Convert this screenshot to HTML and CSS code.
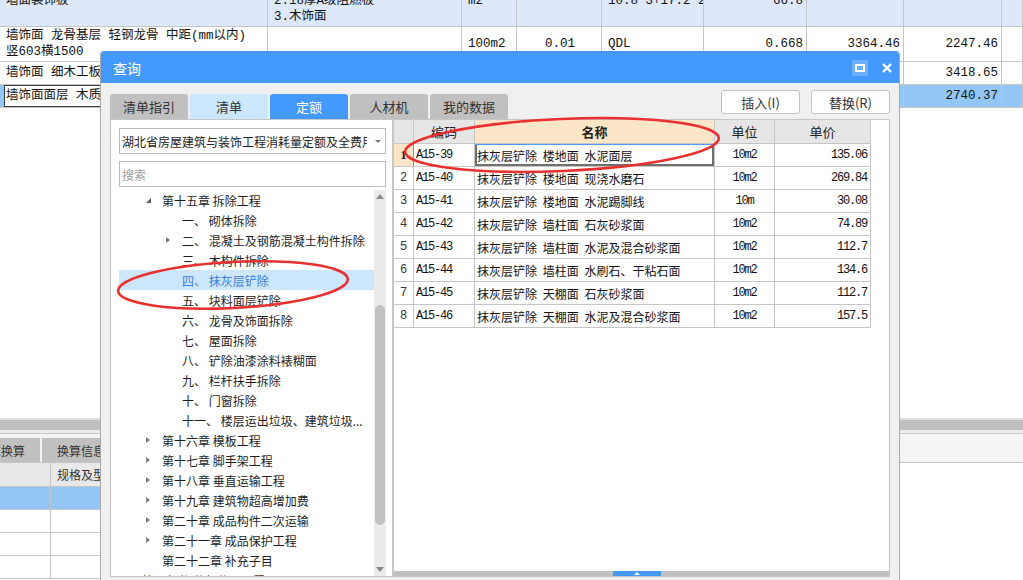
FILE: index.html
```html
<!DOCTYPE html>
<html lang="zh-CN">
<head>
<meta charset="utf-8">
<title>查询</title>
<link rel="stylesheet" href="styles.css">
</head>
<body>
<div class="app">
  <div class="bg">
    <div class="bgt">
      <div class="c r1 up"><span>墙面装饰板</span></div>
      <div class="c r1"><span>2.18厚A级阻燃板<br>3.木饰面</span></div>
      <div class="c r1 up"><span>m2</span></div>
      <div class="c r1 up"></div>
      <div class="c r1 up"><span>10.8*3+17.2*2</span></div>
      <div class="c r1 up rt"><span>66.8</span></div>
      <div class="c r1 up"></div>
      <div class="c r1 up"></div>
      <div class="c r1 up"></div>

      <div class="c"><span>墙饰面 龙骨基层 轻钢龙骨 中距(mm以内)<br>竖603横1500</span></div>
      <div class="c"></div>
      <div class="c"><span>100m2</span></div>
      <div class="c ct"><span>0.01</span></div>
      <div class="c"><span>QDL</span></div>
      <div class="c rt"><span>0.668</span></div>
      <div class="c rt"><span>3364.46</span></div>
      <div class="c rt"><span>2247.46</span></div>
      <div class="c"></div>

      <div class="c"><span>墙饰面 细木工板基层</span></div>
      <div class="c"></div>
      <div class="c"></div>
      <div class="c"></div>
      <div class="c"></div>
      <div class="c"></div>
      <div class="c"></div>
      <div class="c rt"><span>3418.65</span></div>
      <div class="c"></div>

      <div class="c sel ed"><div class="edit">墙饰面面层 木质装饰板</div></div>
      <div class="c sel"></div>
      <div class="c sel"></div>
      <div class="c sel"></div>
      <div class="c sel"></div>
      <div class="c sel"></div>
      <div class="c sel rt"><span>2740.35</span></div>
      <div class="c sel rt"><span>2740.37</span></div>
      <div class="c sel"></div>
    </div>

    <div class="bgspace"></div>

    <div class="bgb">
      <div class="band"></div>
      <div class="tabbar">
        <div class="btab first">标准换算</div>
        <div class="btab">换算信息</div>
      </div>
      <div class="lg">
        <div class="lc lh"></div><div class="lc lh"><span>规格及型号</span></div>
        <div class="lc lsel"></div><div class="lc lsel"></div>
        <div class="lc"></div><div class="lc"></div>
        <div class="lc"></div><div class="lc"></div>
        <div class="lc"></div><div class="lc"></div>
      </div>
    </div>
  </div>

  <div class="dlg">
    <div class="ttl">
      <span class="ttext">查询</span>
      <span class="wbtn max"><i></i></span>
      <span class="wbtn cls">
        <svg width="12" height="12" viewBox="0 0 12 12"><path d="M2 2 L10 10 M10 2 L2 10" stroke="#fff" stroke-width="2.4" fill="none"/></svg>
      </span>
    </div>

    <div class="head">
      <div class="tab">清单指引</div>
      <div class="tab lt">清单</div>
      <div class="tab on">定额</div>
      <div class="tab">人材机</div>
      <div class="tab">我的数据</div>
      <div class="btns">
        <button class="btn">插入(I)</button>
        <button class="btn">替换(R)</button>
      </div>
    </div>

    <div class="body">
      <div class="lp">
        <div class="combo">
          <span class="v">湖北省房屋建筑与装饰工程消耗量定额及全费用基价表</span>
          <span class="ar"></span>
        </div>
        <input class="search" type="text" placeholder="搜索">
        <div class="tree">
          <div class="tl">
            <div class="n l1"><i class="tg ex"></i><span>第十五章 拆除工程</span></div>
            <div class="n l2"><i class="tg"></i><span>一、 砌体拆除</span></div>
            <div class="n l2"><i class="tg co"></i><span>二、 混凝土及钢筋混凝土构件拆除</span></div>
            <div class="n l2"><i class="tg"></i><span>三、 木构件拆除</span></div>
            <div class="n l2 on"><i class="tg"></i><span>四、 抹灰层铲除</span></div>
            <div class="n l2"><i class="tg"></i><span>五、 块料面层铲除</span></div>
            <div class="n l2"><i class="tg"></i><span>六、 龙骨及饰面拆除</span></div>
            <div class="n l2"><i class="tg"></i><span>七、 屋面拆除</span></div>
            <div class="n l2"><i class="tg"></i><span>八、 铲除油漆涂料裱糊面</span></div>
            <div class="n l2"><i class="tg"></i><span>九、 栏杆扶手拆除</span></div>
            <div class="n l2"><i class="tg"></i><span>十、 门窗拆除</span></div>
            <div class="n l2"><i class="tg"></i><span>十一、 楼层运出垃圾、建筑垃圾...</span></div>
            <div class="n l1"><i class="tg co"></i><span>第十六章 模板工程</span></div>
            <div class="n l1"><i class="tg co"></i><span>第十七章 脚手架工程</span></div>
            <div class="n l1"><i class="tg co"></i><span>第十八章 垂直运输工程</span></div>
            <div class="n l1"><i class="tg co"></i><span>第十九章 建筑物超高增加费</span></div>
            <div class="n l1"><i class="tg co"></i><span>第二十章 成品构件二次运输</span></div>
            <div class="n l1"><i class="tg co"></i><span>第二十一章 成品保护工程</span></div>
            <div class="n l1"><i class="tg"></i><span>第二十二章 补充子目</span></div>
            <div class="n l0"><i class="tg"></i><span>第三部分 分部分项工程</span></div>
          </div>
          <div class="vs">
            <i class="vup"></i>
            <i class="vthumb"></i>
            <i class="vdn"></i>
          </div>
        </div>
      </div>

      <div class="rp">
        <div class="tbl">
          <div class="td th"></div>
          <div class="td th">编码</div>
          <div class="td th hsel">名称</div>
          <div class="td th">单位</div>
          <div class="td th">单价</div>

          <div class="td num cur">1</div>
          <div class="td code">A15-39</div>
          <div class="td name foc">抹灰层铲除 楼地面 水泥面层</div>
          <div class="td unit">10m2</div>
          <div class="td price">135.06</div>

          <div class="td num">2</div>
          <div class="td code">A15-40</div>
          <div class="td name">抹灰层铲除 楼地面 现浇水磨石</div>
          <div class="td unit">10m2</div>
          <div class="td price">269.84</div>

          <div class="td num">3</div>
          <div class="td code">A15-41</div>
          <div class="td name">抹灰层铲除 楼地面 水泥踢脚线</div>
          <div class="td unit">10m</div>
          <div class="td price">30.08</div>

          <div class="td num">4</div>
          <div class="td code">A15-42</div>
          <div class="td name">抹灰层铲除 墙柱面 石灰砂浆面</div>
          <div class="td unit">10m2</div>
          <div class="td price">74.89</div>

          <div class="td num">5</div>
          <div class="td code">A15-43</div>
          <div class="td name">抹灰层铲除 墙柱面 水泥及混合砂浆面</div>
          <div class="td unit">10m2</div>
          <div class="td price">112.7</div>

          <div class="td num">6</div>
          <div class="td code">A15-44</div>
          <div class="td name">抹灰层铲除 墙柱面 水刷石、干粘石面</div>
          <div class="td unit">10m2</div>
          <div class="td price">134.6</div>

          <div class="td num">7</div>
          <div class="td code">A15-45</div>
          <div class="td name">抹灰层铲除 天棚面 石灰砂浆面</div>
          <div class="td unit">10m2</div>
          <div class="td price">112.7</div>

          <div class="td num">8</div>
          <div class="td code">A15-46</div>
          <div class="td name">抹灰层铲除 天棚面 水泥及混合砂浆面</div>
          <div class="td unit">10m2</div>
          <div class="td price">157.5</div>
        </div>
        <div class="hs"><span class="hthumb"><i></i></span></div>
      </div>
    </div>
  </div>

  <svg class="ann" width="1023" height="580" viewBox="0 0 1023 580">
    <ellipse cx="233" cy="285" rx="115" ry="23" transform="rotate(-3 233 285)" fill="none" stroke="#e8312f" stroke-width="2.6"/>
    <ellipse cx="562" cy="145" rx="157" ry="26" transform="rotate(-2.5 562 145)" fill="none" stroke="#e8312f" stroke-width="2.6"/>
  </svg>
</div>
</body>
</html>
```

FILE: styles.css
```css
* { box-sizing: border-box; margin: 0; padding: 0; }
html, body { width: 1023px; height: 580px; overflow: hidden; background: #fff; }
body { font-family: "Noto Sans CJK SC", "Liberation Sans", sans-serif; color: #222; }

.app { position: relative; width: 1023px; height: 580px; overflow: hidden; background: #fff; }

/* ---------- background application ---------- */
.bg { display: flex; flex-direction: column; height: 580px; }
.bgt {
  display: grid;
  grid-template-columns: 268px 194px 55px 85px 102px 103px 97px 98px 21px;
  grid-template-rows: 27px 35px 23px 23px;
  font: 12.5px "Liberation Mono", "Noto Sans CJK SC", monospace;
  color: #111;
}
.c {
  border-right: 1px solid #c6c6c6;
  border-bottom: 1px solid #c6c6c6;
  display: flex;
  align-items: center;
  padding: 0 4px 0 6px;
  white-space: nowrap;
  overflow: hidden;
  line-height: 16px;
}
.c.r1 { background: #dde9fb; align-items: flex-end; padding-bottom: 1px; }
.c.r1.up { padding-bottom: 17px; }
.c.rt { justify-content: flex-end; padding-right: 3px; }
.c.ct { justify-content: center; }
.c.sel { background: #92c6f5; }
.c.ed { padding: 0 0 0 4px; align-items: stretch; }
.edit {
  flex: 1;
  background: #fff;
  border: 1px solid #3a3a3a;
  padding-left: 1px;
  display: flex;
  align-items: center;
}

.bgspace { height: 310px; flex: none; }
.bgb { flex: 1; display: flex; flex-direction: column; }
.band {
  height: 15px;
  border-top: 2px solid #e0e0e0;
  border-bottom: 3px solid #ececec;
  background: #c0c0c0;
}
.tabbar {
  height: 30px;
  background: #f4f4f4;
  border-top: 1px solid #c6c6c6;
  border-bottom: 1px solid #c6c6c6;
  display: flex;
  align-items: flex-end;
  gap: 2px;
}
.btab {
  width: 78px;
  height: 24px;
  background: #c0c0c0;
  font-size: 12px;
  color: #333;
  display: flex;
  align-items: center;
  justify-content: center;
}
.btab.first { margin-left: -38px; }
.lg {
  width: 500px;
  display: grid;
  grid-template-columns: 51px 449px;
  grid-template-rows: 24px 23px 23px 23px 23px;
}
.lc { border-right: 1px solid #c6c6c6; border-bottom: 1px solid #c6c6c6; font-size: 12px; display: flex; align-items: center; padding-left: 6px; color: #333; }
.lc.lh { background: #e8e8e8; }
.lc.lsel { background: #92c6f5; }

/* ---------- dialog ---------- */
.dlg {
  position: absolute;
  left: 100px;
  top: 51px;
  width: 800px;
  height: 540px;
  background: #f0f0f0;
  border: 1px solid #a9a9a9;
  border-top-color: #4499ff;
  border-radius: 4px 4px 0 0;
  display: flex;
  flex-direction: column;
}
.ttl {
  height: 31px;
  flex: none;
  background: #4499ff;
  color: #fff;
  display: flex;
  align-items: center;
  padding: 0 6px 0 12px;
  font-size: 14px;
  border-radius: 3px 3px 0 0;
}
.ttext { flex: 1; }
.wbtn { display: flex; align-items: center; justify-content: center; }
.wbtn.max {
  width: 16px;
  height: 16px;
  background: #6cb0ff;
  border-radius: 2px;
  margin-right: 13px;
}
.wbtn.max i {
  display: block;
  width: 10px;
  height: 8px;
  border: 2px solid #fff;
}
.wbtn.cls { width: 12px; height: 12px; }

.head {
  height: 36px;
  flex: none;
  display: flex;
  align-items: flex-end;
  gap: 2px;
  padding: 0 9px;
}
.tab {
  width: 78px;
  height: 25px;
  border-radius: 3px 3px 0 0;
  background: #c0c0c0;
  display: flex;
  align-items: center;
  justify-content: center;
  font-size: 13px;
  color: #333;
}
.tab.lt { background: #cce6fc; }
.tab.on { background: #4499ff; color: #fff; }
.btns {
  margin-left: auto;
  align-self: flex-start;
  margin-top: 7px;
  display: flex;
  gap: 11px;
}
.btn {
  width: 79px;
  height: 24px;
  background: #fff;
  border: 1px solid #c4c4c4;
  border-radius: 3px;
  font: 13px "Noto Sans CJK SC", "Liberation Sans", sans-serif;
  color: #333;
}

.body {
  height: 458px;
  flex: none;
  display: flex;
  padding: 0 9px;
}

/* left panel */
.lp {
  width: 283px;
  flex: none;
  background: #fff;
  border: 1px solid #c6c6c6;
  display: flex;
  flex-direction: column;
  padding: 8px 6px 0 8px;
}
.combo {
  height: 26px;
  flex: none;
  border: 1px solid #bdbdbd;
  display: flex;
  align-items: center;
  padding-left: 2px;
  font-size: 12px;
  color: #222;
}
.combo .v { flex: 1; overflow: hidden; white-space: nowrap; }
.combo .ar {
  width: 18px;
  height: 100%;
  display: flex;
  align-items: center;
  justify-content: center;
  padding-left: 4px;
}
.combo .ar::before {
  content: "";
  border-style: solid;
  border-width: 3px 3px 0 3px;
  border-color: #777 transparent transparent transparent;
}
.search {
  height: 26px;
  flex: none;
  margin-top: 7px;
  border: 1px solid #bdbdbd;
  padding-left: 2px;
  font: 12px "Noto Sans CJK SC", sans-serif;
  color: #222;
  outline: none;
  width: 100%;
}
.search::placeholder { color: #a0a0a0; }

.tree { flex: 1; margin-top: 3px; display: flex; overflow: hidden; }
.tl { flex: 1; overflow: hidden; }
.n {
  height: 20px;
  display: flex;
  align-items: center;
  white-space: nowrap;
  font-size: 12px;
  color: #1e1e1e;
}
.n.l0 { padding-left: 7px; }
.n.l1 { padding-left: 27px; }
.n.l2 { padding-left: 47px; }
.n.on { background: #cce6fc; color: #3c7fd6; }
.tg { width: 16px; flex: none; display: flex; align-items: center; height: 20px; }
.tg.ex::before {
  content: "";
  border-style: solid;
  border-width: 0 0 5px 5px;
  border-color: transparent transparent #5a5a5a transparent;
}
.tg.co::before {
  content: "";
  border-style: solid;
  border-width: 3.5px 0 3.5px 4px;
  border-color: transparent transparent transparent #7a7a7a;
}
.vs {
  width: 12px;
  flex: none;
  background: #ebebeb;
  display: flex;
  flex-direction: column;
  align-items: center;
}
.vup {
  margin-top: 4px;
  border-style: solid;
  border-width: 0 4px 5px 4px;
  border-color: transparent transparent #8a8a8a transparent;
}
.vthumb {
  margin-top: 106px;
  width: 10px;
  height: 220px;
  border-radius: 5px;
  background: #c1c1c1;
}
.vdn {
  margin-top: auto;
  margin-bottom: 4px;
  border-style: solid;
  border-width: 5px 4px 0 4px;
  border-color: #8a8a8a transparent transparent transparent;
}

/* right panel */
.rp {
  flex: 1;
  background: #fff;
  border: 1px solid #c6c6c6;
  display: flex;
  flex-direction: column;
}
.tbl {
  display: grid;
  grid-template-columns: 20px 61px 240px 60px 96px;
  grid-template-rows: 24px repeat(8, 23px);
  width: 477px;
}
.td {
  border-right: 1px solid #c6c6c6;
  border-bottom: 1px solid #c6c6c6;
  display: flex;
  align-items: center;
  white-space: nowrap;
  overflow: hidden;
}
.th {
  background: #e6e6e6;
  justify-content: center;
  font-size: 13px;
  color: #222;
}
.th.hsel { background: #fde5c8; font-weight: bold; }
.num {
  justify-content: center;
  font: 12px "Liberation Mono", monospace;
  color: #333;
}
.num.cur {
  background: #fde5c8;
  font: bold 12px "Liberation Serif", serif;
  color: #111;
  border-right-color: #4499ff;
}
.code {
  padding-left: 2px;
  font: 12px "Liberation Mono", monospace;
  letter-spacing: -1.2px;
  color: #111;
}
.name {
  padding-left: 2px;
  font-size: 12px;
  word-spacing: 3px;
  color: #111;
}
.name.foc {
  box-shadow: inset 0 1px 0 #4a9bff, inset 2px 0 0 #707070, inset -2px 0 0 #707070, inset 0 -2px 0 #707070;
}
.unit {
  justify-content: center;
  font: 12px "Liberation Mono", monospace;
  letter-spacing: -1.2px;
  color: #111;
}
.price {
  justify-content: flex-end;
  padding-right: 3px;
  font: 12px "Liberation Mono", monospace;
  letter-spacing: -1.2px;
  color: #111;
}
.hs {
  margin-top: auto;
  height: 5px;
  background: #c0c0c0;
  display: flex;
}
.hthumb {
  margin-left: 219px;
  width: 48px;
  height: 5px;
  background: #4499ff;
  display: flex;
  align-items: center;
  justify-content: center;
}
.hthumb i {
  border-style: solid;
  border-width: 0 3px 3px 3px;
  border-color: transparent transparent #fff transparent;
}

.ann { position: absolute; left: 0; top: 0; pointer-events: none; }
```
